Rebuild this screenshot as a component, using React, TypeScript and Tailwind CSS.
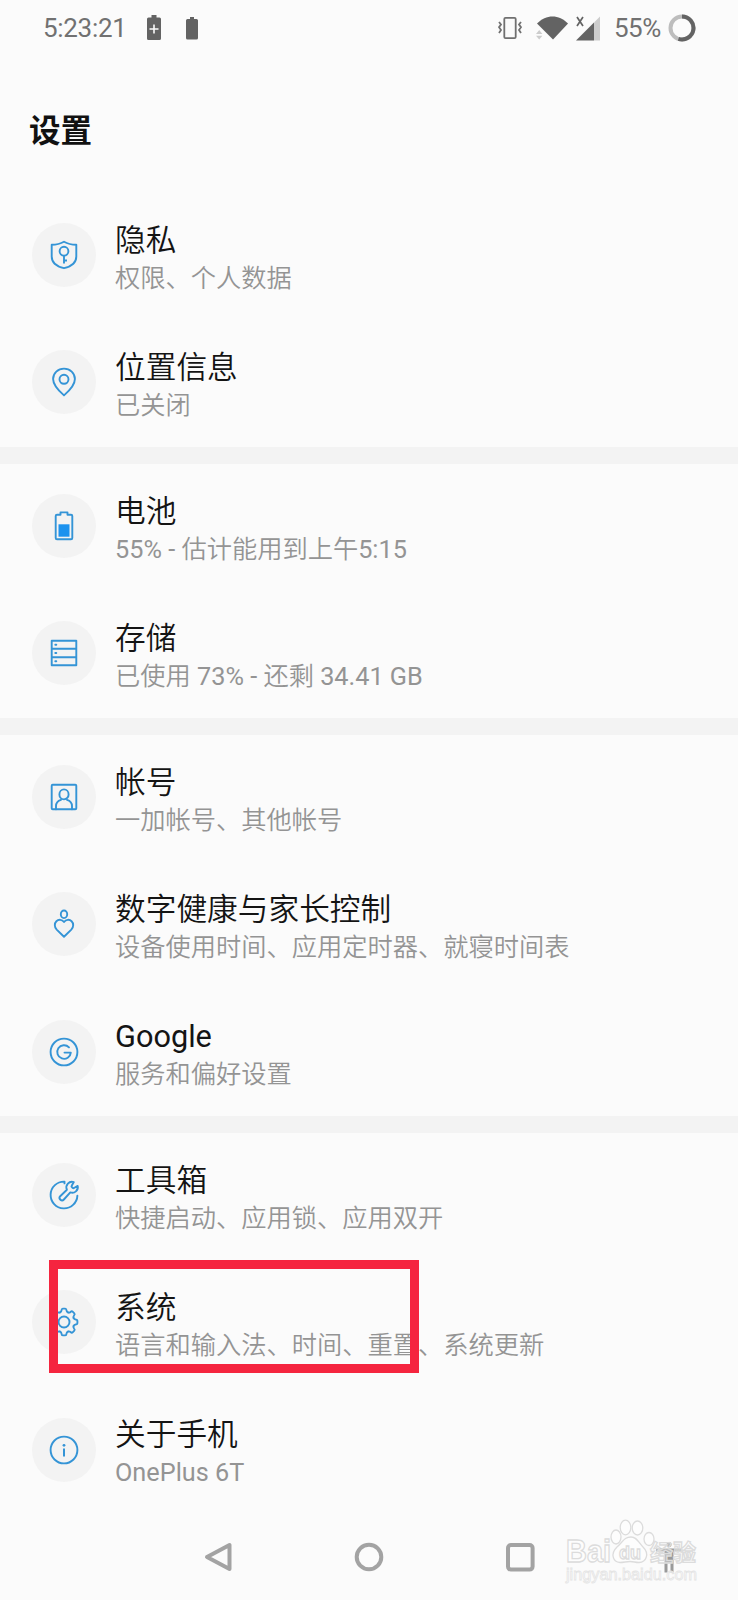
import React from "react";

type SettingItem = {
  title: string;
  summary: string;
  icon: React.ReactNode;
  highlighted?: boolean;
};

// All glyphs are drawn around the centre of a 32px box
const Glyph: React.FC<{ children: React.ReactNode }> = ({ children }) => (
  <svg
    width="32"
    height="32"
    viewBox="-16 -16 32 32"
    fill="none"
    stroke="#3494d6"
    strokeWidth="1.9"
    strokeLinecap="round"
    strokeLinejoin="round"
  >
    {children}
  </svg>
);

const PrivacyIcon = () => (
  <Glyph>
    <path d="M0-13.2C-3.5-11.2-8-10.2-12.3-10.2V1.5C-12.3 8-7 11.5 0 13.2C7 11.5 12.3 8 12.3 1.5V-10.2C8-10.2 3.5-11.2 0-13.2Z" />
    <circle cx="0" cy="-3.8" r="4.4" />
    <path d="M0 .6V8.6M0 5.5H3" strokeLinecap="butt" />
  </Glyph>
);

const LocationIcon = () => (
  <Glyph>
    <path d="M0 13.4C-4.5 9.5-10.9 3.8-10.9-3A10.9 10.4 0 0 1 10.9-3C10.9 3.8 4.5 9.5 0 13.4Z" />
    <circle cx="0" cy="-2.7" r="4.5" />
  </Glyph>
);

const BatteryIcon = () => (
  <Glyph>
    <path d="M-3.5-11.3V-13.6H3.5V-11.3H7A1.3 1.3 0 0 1 8.3-10V12A1.3 1.3 0 0 1 7 13.3H-7A1.3 1.3 0 0 1-8.3 12V-10A1.3 1.3 0 0 1-7-11.3Z" />
    <rect x="-5.5" y="-1.7" width="11" height="12.4" fill="#1c92ee" stroke="none" />
  </Glyph>
);

const StorageIcon = () => (
  <Glyph>
    <path d="M-12.3-12.3H12.3V12.3H-12.3ZM-12.3-4.2H12.3M-12.3 4.2H12.3" />
    <path d="M-8.7-8.3H-7.7M-8.7 0H-7.7M-8.7 8.3H-7.7" />
  </Glyph>
);

const AccountIcon = () => (
  <Glyph>
    <rect x="-12.3" y="-12.3" width="24.6" height="24.6" rx="1" />
    <ellipse cx="0" cy="-2.6" rx="4.6" ry="5" />
    <path d="M-8 12.3V9C-8 5.2-6 3.7-3 2.8M8 12.3V9C8 5.2 6 3.7 3 2.8" />
  </Glyph>
);

const WellbeingIcon = () => (
  <Glyph>
    <ellipse cx="0" cy="-9.7" rx="3.2" ry="3.8" />
    <path d="M0 12.8L-7.3 5.6C-9.8 3-9.7-.8-7.6-2.8C-5.4-4.9-2-4.6 0-2C2-4.6 5.4-4.9 7.6-2.8C9.7-.8 9.8 3 7.3 5.6Z" />
  </Glyph>
);

const GoogleIcon = () => (
  <Glyph>
    <circle cx="0" cy="0" r="13.4" />
    <path d="M5-4.6A6.8 6.8 0 1 0 6.8.6H.5" />
  </Glyph>
);

const ToolboxIcon = () => (
  <Glyph>
    <path d="M.5-11.6V-13.4A13.4 13.4 0 1 0 13.4.6" />
    <path
      transform="translate(-7.5 -15.8)"
      d="M15.2 6.5a1 1 0 0 0 0 1.2l1.1 1.1a1 1 0 0 0 1.2 0l3.7-2.1a5.6 5.6 0 0 1-7.4 6.5l-6.4 7.1a2.4 2.4 0 0 1-3.7-3.3l6.7-6.5a5.6 5.6 0 0 1 6.9-7.6z"
    />
  </Glyph>
);

const SystemIcon = () => (
  <Glyph>
    {[0, 45, 90, 135, 180, 225, 270, 315].map((angle) => (
      <path
        key={angle}
        transform={`rotate(${angle})`}
        d="M-4-9.6C-2.9-10-2.6-10.7-2.5-11.7C-2.4-13-2-13.4-1.2-13.4H1.2C2-13.4 2.4-13 2.5-11.7C2.6-10.7 2.9-10 4-9.6"
      />
    ))}
    <circle cx="0" cy="0" r="5.5" />
  </Glyph>
);

const AboutIcon = () => (
  <Glyph>
    <circle cx="0" cy="0" r="13.4" />
    <path d="M0-1.5V6.6" strokeLinecap="butt" strokeWidth="2" />
    <circle cx="0" cy="-4.7" r="1.4" fill="#3494d6" stroke="none" />
  </Glyph>
);

const sections: SettingItem[][] = [
  [
    { title: "隐私", summary: "权限、个人数据", icon: <PrivacyIcon /> },
    { title: "位置信息", summary: "已关闭", icon: <LocationIcon /> },
  ],
  [
    { title: "电池", summary: "55% - 估计能用到上午5:15", icon: <BatteryIcon /> },
    { title: "存储", summary: "已使用 73% - 还剩 34.41 GB", icon: <StorageIcon /> },
  ],
  [
    { title: "帐号", summary: "一加帐号、其他帐号", icon: <AccountIcon /> },
    {
      title: "数字健康与家长控制",
      summary: "设备使用时间、应用定时器、就寝时间表",
      icon: <WellbeingIcon />,
    },
    { title: "Google", summary: "服务和偏好设置", icon: <GoogleIcon /> },
  ],
  [
    { title: "工具箱", summary: "快捷启动、应用锁、应用双开", icon: <ToolboxIcon /> },
    {
      title: "系统",
      summary: "语言和输入法、时间、重置、系统更新",
      icon: <SystemIcon />,
      highlighted: true,
    },
    { title: "关于手机", summary: "OnePlus 6T", icon: <AboutIcon /> },
  ],
];

// Chinese runs are set in DemiLight, Latin runs and digits in Regular
const MixedText: React.FC<{ text: string }> = ({ text }) => (
  <>
    {text.split(/([\x20-\x7e]+)/).map((run, index) =>
      index % 2 === 1 ? (
        <span key={index} className="font-normal">
          {run}
        </span>
      ) : (
        run
      )
    )}
  </>
);

const StatusBar = () => (
  <div className="flex h-14 items-center justify-between pl-[43px] pr-[42px] text-[26px] text-[#717171]">
    <div className="flex items-center">
      <span className="w-[104px] tracking-[-0.3px]">5:23:21</span>
      <svg width="14" height="26" viewBox="0 0 14 26" fill="#636363">
        <path d="M4.5 0H9.5V2.5H12.5A1.5 1.5 0 0 1 14 4V23.5A1.5 1.5 0 0 1 12.5 25H1.5A1.5 1.5 0 0 1 0 23.5V4A1.5 1.5 0 0 1 1.5 2.5H4.5Z" />
        <path d="M7 9.5V18.5M2.5 14H11.5" stroke="#fbfbfb" strokeWidth="1.6" />
      </svg>
      <svg className="ml-[25px]" width="12" height="23" viewBox="0 0 12 23" fill="#636363">
        <path d="M4 0H8V2H10.5A1.5 1.5 0 0 1 12 3.5V21A1.5 1.5 0 0 1 10.5 22.5H1.5A1.5 1.5 0 0 1 0 21V3.5A1.5 1.5 0 0 1 1.5 2H4Z" />
      </svg>
    </div>
    <div className="flex items-center">
      <svg width="24" height="22" viewBox="0 0 24 22" fill="none" stroke="#707070" strokeWidth="1.8">
        <rect x="6.3" y=".9" width="11.4" height="20.2" rx="1.2" />
        <path d="M1 5L3 7.5L1 10.2L3 13L1 16M23 5L21 7.5L23 10.2L21 13L23 16" />
      </svg>
      <svg className="ml-[14px]" width="33" height="24" viewBox="0 0 33 24">
        <path d="M1 7.5C10-2 23-2 32 7.5L17 23.5Z" fill="#636363" />
        <path d="M0 18L3.2 14L6.4 18ZM0 19.8L3.2 23.5L6.4 19.8Z" fill="#ccc" />
      </svg>
      <svg className="ml-[7px]" width="25" height="25" viewBox="0 0 25 25">
        <path d="M18 6.5L24 .5V24.5H18Z" fill="#ccc" />
        <path d="M18 6.5V24.5H0Z" fill="#636363" />
        <path d="M1 1L7 10M7 1L1 10" stroke="#636363" strokeWidth="1.7" />
      </svg>
      <span className="ml-[13px] w-[54px] tracking-[-0.5px]">55%</span>
      <svg width="28" height="28" viewBox="-14 -14 28 28" fill="none" strokeWidth="4">
        <circle r="11.5" stroke="#bdbdbd" />
        <path d="M0-11.5A11.5 11.5 0 1 1-3.55 10.94" stroke="#636363" />
      </svg>
    </div>
  </div>
);

const SettingRow: React.FC<{ item: SettingItem }> = ({ item }) => (
  <div className="relative flex h-[127.1px] items-center pb-[2px] pl-8">
    <div className="flex size-16 shrink-0 items-center justify-center rounded-full bg-[#f3f3f3]">
      {item.icon}
    </div>
    <div className="ml-[19px] whitespace-nowrap pt-[2.6px] font-[350]">
      <div className="text-[30.7px] leading-[44px] text-[#141414]">
        <MixedText text={item.title} />
      </div>
      <div className="text-[25.25px] leading-[32px] text-[#949494]">
        <MixedText text={item.summary} />
      </div>
    </div>
    {item.highlighted && (
      <div className="absolute left-[49px] top-0 h-[113px] w-[370px] border-[9px] border-[#f5253f]" />
    )}
  </div>
);

const NavBar = () => (
  <div className="flex h-[86px] items-center pl-[203px]">
    <div className="flex w-[332px] items-center justify-between">
      <svg width="30" height="30" viewBox="0 0 30 30" fill="none" stroke="#a3a3a3" strokeWidth="4" strokeLinejoin="round">
        <path d="M26.5 3V27L4 15Z" />
      </svg>
      <svg width="30" height="30" viewBox="0 0 30 30" fill="none" stroke="#a3a3a3" strokeWidth="4">
        <circle cx="15" cy="15" r="12.3" />
      </svg>
      <svg width="30" height="30" viewBox="0 0 30 30" fill="none" stroke="#a3a3a3" strokeWidth="4">
        <rect x="3" y="3" width="24.6" height="24.6" rx="3" />
      </svg>
    </div>
    <svg className="ml-[121px]" width="26" height="32" viewBox="0 0 26 32" fill="#9a9a9a">
      <circle cx="13" cy="3.5" r="2.5" />
      <path d="M0 7.5H26V10.5H17.5V31.5H14.5V22H11.5V31.5H8.5V10.5H0Z" />
    </svg>
  </div>
);

const Watermark = () => (
  <svg
    className="absolute bottom-[10px] right-[34px]"
    width="144"
    height="74"
    viewBox="0 0 144 74"
    fill="#fdfdfd"
    stroke="#dcdcdc"
    strokeWidth="1.3"
    fontFamily="'Liberation Sans', 'Noto Sans CJK SC', sans-serif"
  >
    <text x="6" y="45.5" fontSize="31" fontWeight="700" textLength="45" lengthAdjust="spacingAndGlyphs">
      Bai
    </text>
    <ellipse cx="56" cy="21" rx="5" ry="7" />
    <ellipse cx="65.5" cy="11.5" rx="5.3" ry="7.3" />
    <ellipse cx="77.5" cy="12" rx="5.3" ry="7" />
    <ellipse cx="89" cy="23" rx="5" ry="6.5" />
    <path d="M71 21C77 21 78 26 83 31C90 38 86 46 79 46.5C75 46.5 74 45.5 70 45.5C66 45.5 64 46.5 60 46.5C53 46 50 38 57 31C63 26 64 21 71 21Z" />
    <text x="59" y="43" fontSize="19" fontWeight="700" textLength="22" lengthAdjust="spacingAndGlyphs">
      du
    </text>
    <text x="90" y="44.5" fontSize="23" fontWeight="700" fillOpacity=".35" textLength="46">
      经验
    </text>
    <text
      x="6"
      y="64"
      fontSize="17"
      stroke="#e4e4e4"
      strokeWidth=".8"
      fillOpacity=".6"
      textLength="131"
      lengthAdjust="spacingAndGlyphs"
    >
      jingyan.baidu.com
    </text>
  </svg>
);

const App: React.FC = () => {
  return (
    <div
      lang="zh-CN"
      className="relative h-[1600px] w-[738px] overflow-hidden bg-[#fbfbfb] font-[Roboto,'Noto_Sans_CJK_SC',sans-serif]"
    >
      <StatusBar />
      <h1 className="flex h-[136.8px] items-center pl-[29px] pt-[14px] text-[31.5px] font-bold text-[#111]">
        设置
      </h1>

      {sections.map((items, index) => (
        <div key={index}>
          {index > 0 && <div className="h-[16.8px] bg-[#f3f3f3]" />}
          {items.map((item) => (
            <SettingRow key={item.title} item={item} />
          ))}
        </div>
      ))}

      <NavBar />
      <Watermark />
    </div>
  );
};

export default App;
